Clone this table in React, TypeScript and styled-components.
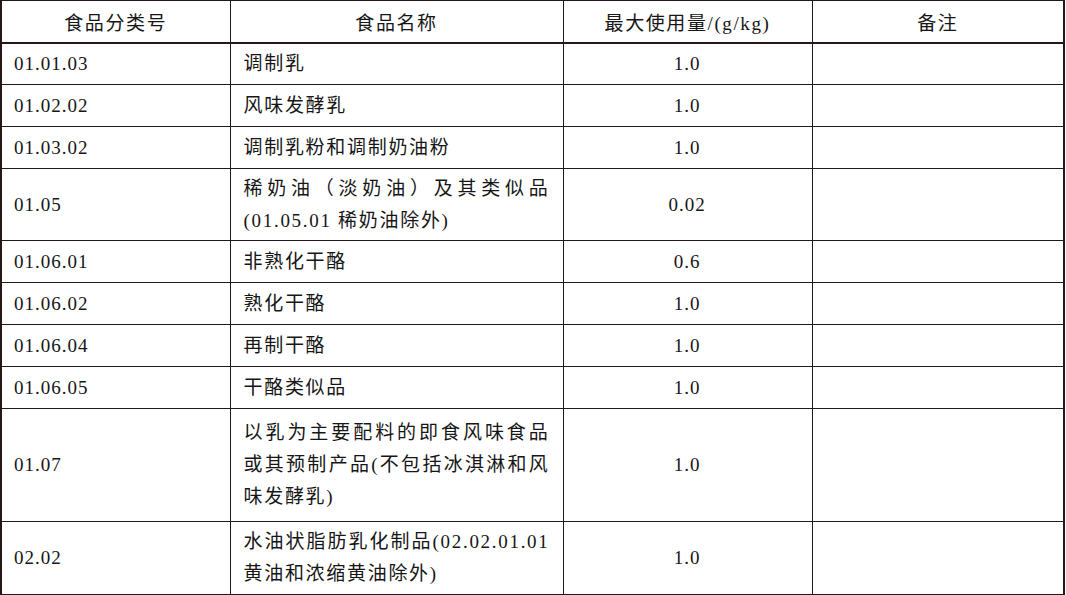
import React from "react";
import styled, { createGlobalStyle } from "styled-components";

const Global = createGlobalStyle`
  html, body { margin: 0; padding: 0; background: #fff; }
  body {
    font-family: "Liberation Serif", "Noto Sans CJK SC", serif;
    color: #161616;
  }
`;

const LINE = "#231815";

const Table = styled.table`
  width: 1065px;
  border-collapse: collapse;
  table-layout: fixed;
  border-top: 1px solid ${LINE};
  border-left: 2px solid ${LINE};
  border-right: 2px solid ${LINE};
  border-bottom: 2px solid ${LINE};
  font-size: 19px;
  letter-spacing: 1px;
`;

const HeadRow = styled.tr`
  height: 42px;
  border-bottom: 2px solid ${LINE};
`;

const Row = styled.tr<{ $h: number }>`
  height: ${(p) => p.$h}px;
  border-bottom: 1px solid ${LINE};
`;

const Th = styled.th`
  font-weight: normal;
  text-align: center;
  vertical-align: middle;
  padding: 0;
  letter-spacing: 1.6px;
  border-left: 1px solid ${LINE};
  &:first-child { border-left: none; }
`;

const Td = styled.td<{ $align?: "left" | "center"; $wide?: boolean }>`
  padding: 0 13px 0 ${(p) => (p.$wide ? "13px" : "12px")};
  vertical-align: middle;
  text-align: ${(p) => p.$align ?? "left"};
  letter-spacing: ${(p) => (p.$wide ? "1.7px" : "1px")};
  border-left: 1px solid ${LINE};
  &:first-child { border-left: none; }
`;

const Line = styled.div<{ $fill?: boolean }>`
  line-height: 32px;
  white-space: nowrap;
  text-align: ${(p) => (p.$fill ? "justify" : "left")};
  text-align-last: ${(p) => (p.$fill ? "justify" : "left")};
  text-justify: inter-character;
`;

type Item = { code: string; name: string[]; max: string; h: number };

const rows: Item[] = [
  { code: "01.01.03", name: ["调制乳"], max: "1.0", h: 42 },
  { code: "01.02.02", name: ["风味发酵乳"], max: "1.0", h: 42 },
  { code: "01.03.02", name: ["调制乳粉和调制奶油粉"], max: "1.0", h: 42 },
  {
    code: "01.05",
    name: ["稀奶油（淡奶油）及其类似品", "(01.05.01 稀奶油除外)"],
    max: "0.02",
    h: 72,
  },
  { code: "01.06.01", name: ["非熟化干酪"], max: "0.6", h: 42 },
  { code: "01.06.02", name: ["熟化干酪"], max: "1.0", h: 42 },
  { code: "01.06.04", name: ["再制干酪"], max: "1.0", h: 42 },
  { code: "01.06.05", name: ["干酪类似品"], max: "1.0", h: 42 },
  {
    code: "01.07",
    name: ["以乳为主要配料的即食风味食品", "或其预制产品(不包括冰淇淋和风", "味发酵乳)"],
    max: "1.0",
    h: 113,
  },
  {
    code: "02.02",
    name: ["水油状脂肪乳化制品(02.02.01.01", "黄油和浓缩黄油除外)"],
    max: "1.0",
    h: 73,
  },
];

export default function App() {
  return (
    <>
      <Global />
      <Table>
        <colgroup>
          <col style={{ width: 229 }} />
          <col style={{ width: 333 }} />
          <col style={{ width: 249 }} />
          <col />
        </colgroup>
        <thead>
          <HeadRow>
            <Th>食品分类号</Th>
            <Th>食品名称</Th>
            <Th>最大使用量/(g/kg)</Th>
            <Th>备注</Th>
          </HeadRow>
        </thead>
        <tbody>
          {rows.map((r) => (
            <Row key={r.code} $h={r.h}>
              <Td>{r.code}</Td>
              <Td $wide>
                {r.name.map((l, i) => (
                  <Line key={i} $fill={r.name.length > 1 && i < r.name.length - 1}>
                    {l}
                  </Line>
                ))}
              </Td>
              <Td $align="center">{r.max}</Td>
              <Td />
            </Row>
          ))}
        </tbody>
      </Table>
    </>
  );
}
